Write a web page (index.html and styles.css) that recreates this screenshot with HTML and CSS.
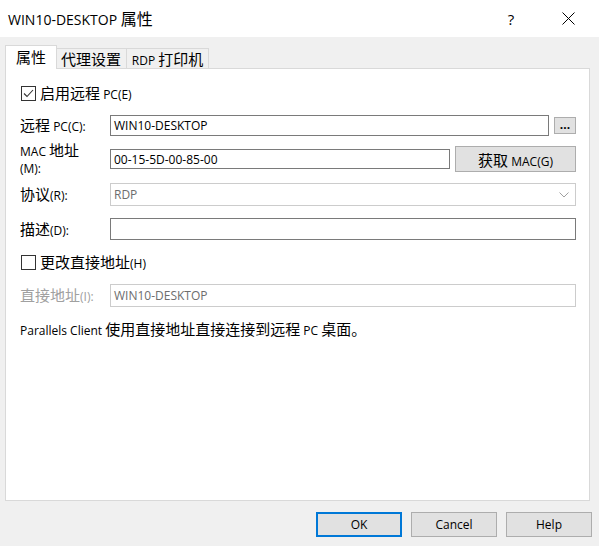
FILE: index.html
```html
<!DOCTYPE html>
<html lang="zh-CN">
<head>
<meta charset="utf-8">
<title>WIN10-DESKTOP 属性</title>
<link rel="stylesheet" href="styles.css">
</head>
<body>
<div class="window">
  <div class="titlebar">
    <div class="title">WIN10-DESKTOP <span class="cjk">属性</span></div>
    <div class="tb-controls">
      <span class="help">?</span>
      <svg class="close" width="13" height="13" viewBox="0 0 13 13"><path d="M0.5 0.5 L12.5 12.5 M12.5 0.5 L0.5 12.5" stroke="#000" stroke-width="1" fill="none"/></svg>
    </div>
  </div>
  <div class="body">
    <div class="tabs">
      <div class="tab active"><span class="cjk">属性</span></div>
      <div class="tab t2"><span class="cjk">代理设置</span></div>
      <div class="tab t3"><span>RDP <span class="cjk">打印机</span></span></div>
    </div>
    <div class="panel">
      <div class="row r-check1">
        <span class="checkbox checked"><svg width="13" height="13" viewBox="0 0 13 13"><path d="M2 6.5 L5 9.5 L11 3" stroke="#333" stroke-width="1.1" fill="none"/></svg></span>
        <span class="check-label"><span class="cjk">启用远程</span> PC(E)</span>
      </div>
      <div class="row r-remote">
        <label class="lbl"><span class="cjk">远程</span> PC(C):</label>
        <div class="field">
          <div class="input grow">WIN10-DESKTOP</div>
          <div class="btn dots">...</div>
        </div>
      </div>
      <div class="row r-mac">
        <label class="lbl two"><span>MAC <span class="cjk">地址</span></span><span>(M):</span></label>
        <div class="field">
          <div class="input mac">00-15-5D-00-85-00</div>
          <div class="btn getmac"><span><span class="cjk">获取</span> MAC(G)</span></div>
        </div>
      </div>
      <div class="row r-proto">
        <label class="lbl"><span class="cjk">协议</span>(R):</label>
        <div class="field">
          <div class="input disabled grow select"><span>RDP</span>
            <svg class="chev" width="10" height="6" viewBox="0 0 10 6"><path d="M0.5 0.5 L5 5 L9.5 0.5" stroke="#a0a0a0" stroke-width="1" fill="none"/></svg>
          </div>
        </div>
      </div>
      <div class="row r-desc">
        <label class="lbl"><span class="cjk">描述</span>(D):</label>
        <div class="field">
          <div class="input grow"></div>
        </div>
      </div>
      <div class="row r-check2">
        <span class="checkbox"></span>
        <span class="check-label"><span class="cjk">更改直接地址</span>(H)</span>
      </div>
      <div class="row r-direct">
        <label class="lbl gray"><span class="cjk">直接地址</span>(I):</label>
        <div class="field">
          <div class="input disabled grow">WIN10-DESKTOP</div>
        </div>
      </div>
      <p class="note">Parallels Client <span class="cjk">使用直接地址直接连接到远程</span> PC <span class="cjk">桌面。</span></p>
    </div>
    <div class="footer">
      <div class="btn fbtn default">OK</div>
      <div class="btn fbtn">Cancel</div>
      <div class="btn fbtn">Help</div>
    </div>
  </div>
</div>
</body>
</html>
```

FILE: styles.css
```css
* { box-sizing: border-box; }
html, body { margin: 0; padding: 0; }
body {
  width: 599px;
  height: 546px;
  overflow: hidden;
  font-family: "Open Sans", "Noto Sans CJK SC", sans-serif;
  font-size: 12px;
  color: #000;
  background: #f0f0f0;
}
.cjk {
  font-family: "Noto Sans CJK SC", sans-serif;
  font-size: 15px;
}
.window { width: 599px; height: 546px; display: flex; flex-direction: column; }

.titlebar {
  height: 37px;
  background: #fff;
  display: flex;
  align-items: center;
  justify-content: space-between;
  padding: 0 0 0 8px;
}
.title { font-size: 14px; line-height: 20px; }
.title .cjk { font-size: 16px; }
.tb-controls { display: flex; align-items: center; height: 37px; }
.help { font-size: 15px; width: 20px; margin-right: 41px; text-align: center; }
.close { display: block; margin-right: 24px; }

.body { flex: 1; display: flex; flex-direction: column; }
.tabs {
  margin: 8px 0 0 5px;
  height: 23px;
  display: flex;
  align-items: flex-end;
}
.tab {
  height: 20px;
  border: 1px solid #d9d9d9;
  border-bottom: none;
  background: #f0f0f0;
  display: flex;
  align-items: center;
  justify-content: center;
  line-height: 1;
  white-space: nowrap;
}
.tab.active {
  width: 52px;
  height: 24px;
  margin-bottom: -1px;
  background: #fff;
  position: relative;
  z-index: 1;
  padding-bottom: 2px;
}
.tab.t2 { width: 71px; margin-left: -1px; border-left: none; }
.tab.t3 { width: 83px; margin-left: -1px; }

.panel {
  margin-left: 5px;
  width: 585px;
  height: 433px;
  background: #fff;
  border: 1px solid #d9d9d9;
  padding: 0 13px 0 14px;
}
.row { display: flex; align-items: center; }
.r-check1 { margin-top: 17px; height: 15px; padding-left: 1px; }
.r-remote { margin-top: 14px; height: 21px; }
.r-mac { margin-top: 10px; height: 26px; }
.r-proto { margin-top: 11px; height: 23px; }
.r-desc { margin-top: 12px; height: 22px; }
.r-check2 { margin-top: 15px; height: 15px; padding-left: 1px; }
.r-direct { margin-top: 14px; height: 23px; }

.checkbox {
  width: 15px;
  height: 15px;
  border: 1px solid #333;
  background: #fff;
  display: flex;
  align-items: center;
  justify-content: center;
  flex: none;
}
.checkbox svg { display: block; }
.check-label { margin-left: 4px; white-space: nowrap; line-height: 15px; }

.lbl { width: 90px; flex: none; white-space: nowrap; line-height: 17px; }
.lbl.two { display: flex; flex-direction: column; }
.lbl.gray { color: #a0a0a0; }
.field { flex: 1; display: flex; align-items: center; height: 100%; }

.input {
  height: 100%;
  border: 1px solid #7a7a7a;
  background: #fff;
  padding: 0 3px;
  display: flex;
  align-items: center;
  white-space: nowrap;
}
.input.grow { flex: 1; }
.input.mac { width: 340px; height: 20px; }
.input.disabled { border-color: #cccccc; color: #6d6d6d; }
.select { justify-content: space-between; padding-right: 6px; }
.chev { display: block; }

.btn {
  background: #e1e1e1;
  border: 1px solid #adadad;
  display: flex;
  align-items: center;
  justify-content: center;
  white-space: nowrap;
}
.dots { width: 22px; height: 17px; margin-left: 5px; font-weight: bold; padding-bottom: 2px; }
.getmac { width: 121px; height: 26px; margin-left: 5px; }

.note { margin: 13px 0 0 0; line-height: 18px; white-space: nowrap; }

.footer {
  display: flex;
  justify-content: flex-end;
  gap: 9px;
  margin-top: 11px;
  padding-right: 7px;
}
.fbtn { width: 86px; height: 25px; }
.fbtn.default { border: 2px solid #0078d7; }
```
